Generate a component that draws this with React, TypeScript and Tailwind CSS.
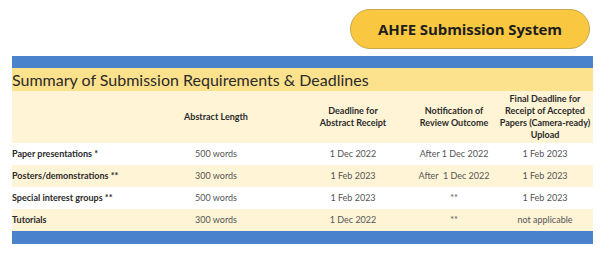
const rows = [
    { name: 'Paper presentations *', words: '500 words', abstract: '1 Dec 2022', notify: 'After 1 Dec 2022', final: '1 Feb 2023' },
    { name: 'Posters/demonstrations **', words: '300 words', abstract: '1 Feb 2023', notify: 'After  1 Dec 2022', final: '1 Feb 2023' },
    { name: 'Special interest groups **', words: '500 words', abstract: '1 Feb 2023', notify: '**', final: '1 Feb 2023' },
    { name: 'Tutorials', words: '300 words', abstract: '1 Dec 2022', notify: '**', final: 'not applicable' },
];

const cols = 'grid grid-cols-[125px_158px_116px_86px_96px]';

export default function App() {
    return (
        <div className="w-[600px] h-[254px] bg-white font-['Lato',sans-serif] overflow-hidden">
            <div className="flex justify-end pr-[10px] pt-[9px]">
                <div className="w-[240px] h-[40px] rounded-full bg-[#f9c740] border border-[#c8a84c] flex items-center justify-center">
                    <span className="font-['Open_Sans',sans-serif] font-bold text-[15px] text-[#1e1e1e] tracking-[-0.1px]">AHFE Submission System</span>
                </div>
            </div>

            <div className="mx-[12px] mt-[7px] w-[581px]">
                <div className="h-[12px] bg-[#4a83cc]" />
                <div className="h-[23px] bg-[#fde28e] flex items-center pt-[1px] text-[16px] leading-none text-[#2a2a2a]">
                    Summary of Submission Requirements &amp; Deadlines
                </div>

                <div className={`${cols} h-[52px] bg-[#fff4d6] items-center text-[9px] leading-[12px] font-bold text-[#2a2a2a]`}>
                    <div />
                    <div className="text-center">Abstract Length</div>
                    <div className="text-center">Deadline for<br />Abstract Receipt</div>
                    <div className="text-center">Notification of<br />Review Outcome</div>
                    <div className="text-center">Final Deadline for<br />Receipt of Accepted<br />Papers (Camera-ready)<br />Upload</div>
                </div>

                {rows.map((r, i) => (
                    <div
                        key={r.name}
                        className={`${cols} h-[22px] items-center text-[9px] ${i % 2 === 1 ? 'bg-[#fff4d6]' : 'bg-white'}`}
                    >
                        <div className="font-bold text-[#2a2a2a] whitespace-nowrap">{r.name}</div>
                        <div className="text-center text-[#555]">{r.words}</div>
                        <div className="text-center text-[#555]">{r.abstract}</div>
                        <div className="text-center text-[#555] whitespace-pre">{r.notify}</div>
                        <div className="text-center text-[#555]">{r.final}</div>
                    </div>
                ))}

                <div className="h-[13px] bg-[#4a83cc]" />
            </div>
        </div>
    );
}
